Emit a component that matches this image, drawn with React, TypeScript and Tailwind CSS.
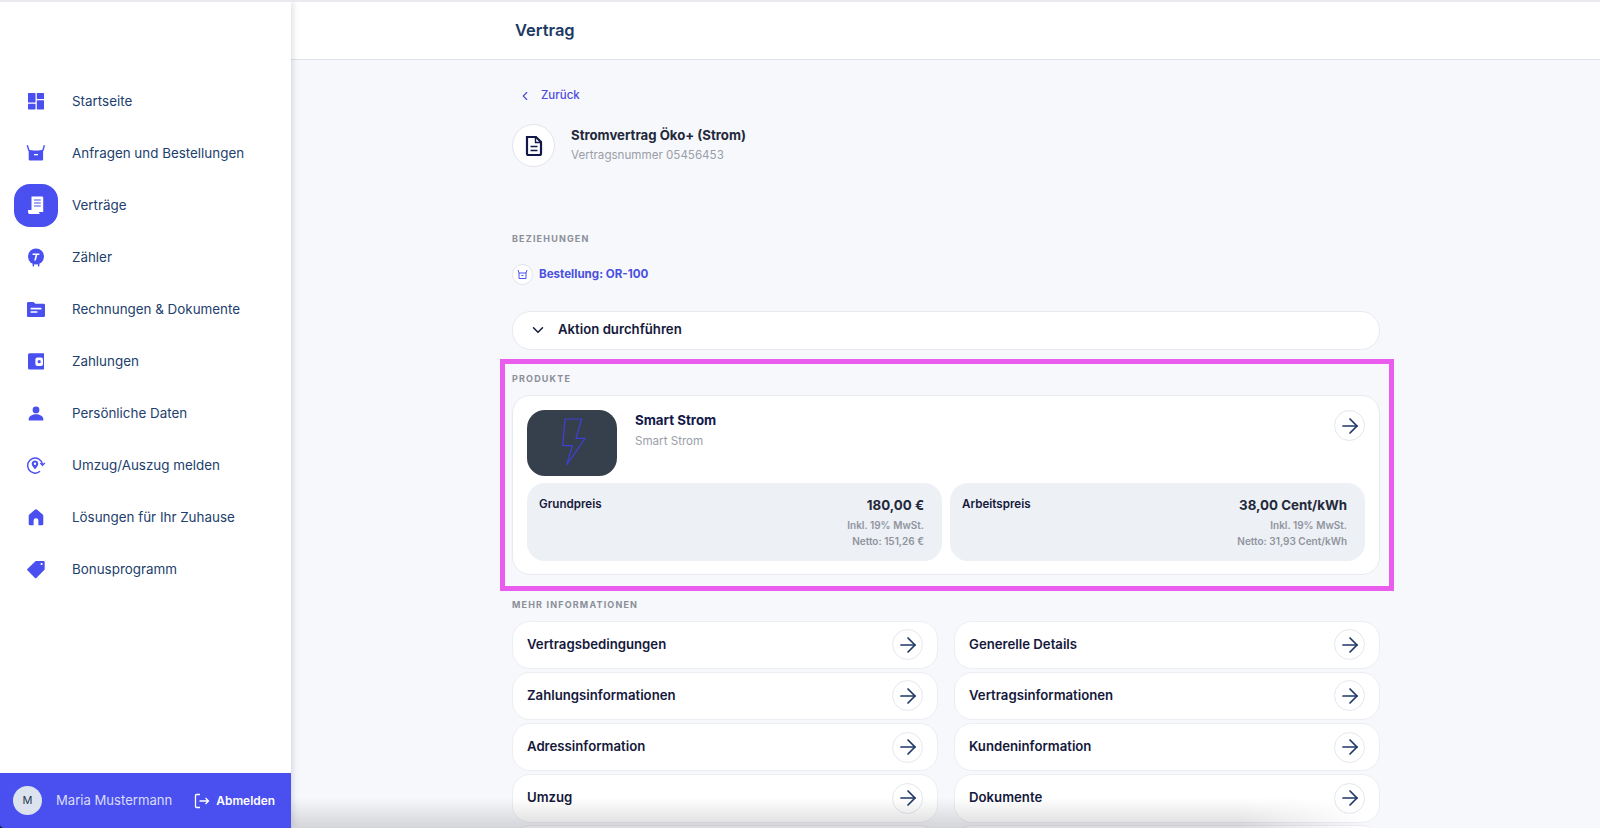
import React from 'react';
import { ArrowRight, ChevronDown, ChevronLeft } from 'lucide-react';

const BLUE = '#4a50ef';

const IconBox: React.FC<{ children: React.ReactNode; fill?: string }> = ({ children, fill = BLUE }) => (
  <svg width="24" height="24" viewBox="0 0 24 24" fill={fill}>
    {children}
  </svg>
);

const navItems: { label: string; icon: React.ReactNode; active?: boolean }[] = [
  {
    label: 'Startseite',
    icon: (
      <IconBox>
        <rect x="4" y="4" width="7.5" height="9.5" rx="0.6" />
        <rect x="4" y="14.8" width="7.5" height="5.6" rx="0.6" />
        <rect x="12.8" y="4" width="7.2" height="6" rx="0.6" />
        <rect x="12.8" y="11.2" width="7.2" height="9.2" rx="0.6" />
      </IconBox>
    ),
  },
  {
    label: 'Anfragen und Bestellungen',
    icon: (
      <IconBox>
        <path d="M3.3 4.3 L4.9 9.6 M20.4 4.3 L18.9 9.6" stroke={BLUE} strokeWidth="1.4" fill="none" />
        <path d="M4.7 8.4 C8 9.8 16 9.8 19.1 8.4 V18.3 a1.2 1.2 0 0 1 -1.2 1.2 H5.9 a1.2 1.2 0 0 1 -1.2 -1.2 Z" />
        <rect x="10" y="13" width="4" height="1.3" fill="#fff" />
      </IconBox>
    ),
  },
  {
    label: 'Verträge',
    active: true,
    icon: (
      <IconBox fill="#fff">
        <path d="M7.5 3.5 H18 a1.2 1.2 0 0 1 1.2 1.2 V19 H8 a0.5 0.5 0 0 1 -0.5 -0.5 Z" />
        <path d="M4 17 H15 V19 a2.2 2.2 0 0 0 1.2 2 H5.5 A1.9 1.9 0 0 1 4 19 Z" />
        <path d="M10 7 H16.8 M10 10 H16.8 M10 13 H16.8" stroke={BLUE} strokeWidth="1.1" fill="none" />
      </IconBox>
    ),
  },
  {
    label: 'Zähler',
    icon: (
      <IconBox>
        <circle cx="12" cy="11.5" r="8" />
        <path d="M8.5 19 L8.8 21.5 H10 L10.2 19 Z M13.8 19 L14 21.5 H15.2 L15.5 19 Z" />
        <path d="M8.6 8.6 H15.4 V9.9 H13.3 L11.8 15.6 H10.2 L11.6 9.9 H8.6 Z" fill="#fff" />
      </IconBox>
    ),
  },
  {
    label: 'Rechnungen & Dokumente',
    icon: (
      <IconBox>
        <path d="M3 6.2 A1.2 1.2 0 0 1 4.2 5 H9.5 L11.3 6.8 H19.8 A1.2 1.2 0 0 1 21 8 V18.8 A1.2 1.2 0 0 1 19.8 20 H4.2 A1.2 1.2 0 0 1 3 18.8 Z" />
        <rect x="6.5" y="10.8" width="11" height="1.6" rx="0.4" fill="#fff" />
        <rect x="6.5" y="14.2" width="7" height="1.6" rx="0.4" fill="#fff" />
      </IconBox>
    ),
  },
  {
    label: 'Zahlungen',
    icon: (
      <IconBox>
        <path d="M5.5 4.3 H20 V20.6 H5.5 A1.5 1.5 0 0 1 4 19.1 V5.8 A1.5 1.5 0 0 1 5.5 4.3 Z" />
        <rect x="11.4" y="8.4" width="7.6" height="8.6" rx="2" fill="#fff" />
        <circle cx="15.2" cy="12.7" r="1.6" />
      </IconBox>
    ),
  },
  {
    label: 'Persönliche Daten',
    icon: (
      <IconBox>
        <circle cx="12" cy="8.9" r="3.4" />
        <path d="M4.7 19.5 V18 C4.7 15 8.7 13.2 12 13.2 S19.3 15 19.3 18 V19.5 Z" />
      </IconBox>
    ),
  },
  {
    label: 'Umzug/Auszug melden',
    icon: (
      <IconBox>
        <path d="M16 18.3 A7.5 7.5 0 1 1 18.5 11.5" stroke={BLUE} strokeWidth="1.5" fill="none" />
        <path d="M16.4 10 L18.5 12.2 L20.8 10" stroke={BLUE} strokeWidth="1.5" fill="none" />
        <path d="M11 7.6 C13 7.6 14.3 9 14.3 10.7 C14.3 12.6 12.4 14.6 11 16.2 C9.6 14.6 7.7 12.6 7.7 10.7 C7.7 9 9 7.6 11 7.6 Z" />
        <circle cx="11" cy="10.7" r="1.2" fill="#fff" />
      </IconBox>
    ),
  },
  {
    label: 'Lösungen für Ihr Zuhause',
    icon: (
      <IconBox>
        <path d="M10.8 4.8 a1.9 1.9 0 0 1 2.4 0 L18.7 9.4 a1.8 1.8 0 0 1 .6 1.4 V19 a1.3 1.3 0 0 1 -1.3 1.3 H14.4 V15.6 a2.4 2.4 0 0 0 -4.8 0 V20.3 H6 a1.3 1.3 0 0 1 -1.3 -1.3 V10.8 a1.8 1.8 0 0 1 .6 -1.4 Z" />
      </IconBox>
    ),
  },
  {
    label: 'Bonusprogramm',
    icon: (
      <IconBox>
        <path d="M11.7 4 H19.7 a1 1 0 0 1 1 1 V12.6 L12.4 21 a1 1 0 0 1 -1.4 0 L3.4 13.3 a1 1 0 0 1 0 -1.4 Z" />
        <circle cx="17.6" cy="7" r="1.1" fill="#fff" />
      </IconBox>
    ),
  },
];

const infoLinks = [
  'Vertragsbedingungen',
  'Generelle Details',
  'Zahlungsinformationen',
  'Vertragsinformationen',
  'Adressinformation',
  'Kundeninformation',
  'Umzug',
  'Dokumente',
];

const ArrowButton: React.FC = () => (
  <div className="flex h-[31px] w-[31px] shrink-0 items-center justify-center rounded-full border border-[#e4e7ee] bg-white text-[#1d3766]">
    <ArrowRight size={24} strokeWidth={1.7} />
  </div>
);

const SectionLabel: React.FC<{ children: React.ReactNode }> = ({ children }) => (
  <div className="h-3 text-[9px] leading-3 font-bold tracking-[0.13em] text-[#8b8f98]">{children}</div>
);

const PriceBox: React.FC<{ label: string; price: string; net: string }> = ({ label, price, net }) => (
  <div className="flex h-[77.5px] justify-between rounded-[18px] bg-[#edf0f5] pt-[12px] pr-[18px] pl-[12px]">
    <div className="text-[11.6px] leading-[18px] font-semibold text-[#15193c]">{label}</div>
    <div className="text-right">
      <div className="text-[13.3px] leading-[20px] font-bold text-[#23293a]">{price}</div>
      <div className="mt-[2px] text-[10px] leading-[16px] font-semibold text-[#90949e]">Inkl. 19% MwSt.</div>
      <div className="text-[10px] leading-[16px] font-semibold text-[#90949e]">{net}</div>
    </div>
  </div>
);

const App: React.FC = () => {
  return (
    <div className="flex h-[828px] overflow-hidden border-t-2 border-[#e9eaee] bg-[#f6f8fc] font-['Inter',sans-serif]">
      {/* Sidebar */}
      <aside className="z-10 flex h-full w-[291px] shrink-0 flex-col bg-white shadow-[2px_0_6px_rgba(30,35,60,0.14)]">
        <nav className="flex-1 pt-[73px]">
          {navItems.map((item) => (
            <div key={item.label} className="flex h-[52px] items-center">
              <div
                className={`ml-[14px] flex h-[43px] w-[44px] items-center justify-center rounded-[16px] ${
                  item.active ? 'bg-[#4a50ef]' : ''
                }`}
              >
                {item.icon}
              </div>
              <span className="ml-[14px] text-[13.4px] text-[#22406d]">{item.label}</span>
            </div>
          ))}
        </nav>
        <div className="bg-[#15171f]">
          <div className="flex h-[55px] items-center rounded-bl-[4px] bg-[#4a50ef] pr-[16px] pl-[13px]">
            <div className="flex h-[29px] w-[29px] items-center justify-center rounded-full bg-[#dbe4ee] text-[11px] text-[#2b3a4f]">
              M
            </div>
            <span className="ml-[14px] text-[13.1px] text-[#d9dcfb]">Maria Mustermann</span>
            <svg className="ml-auto" width="16" height="16" viewBox="0 0 16 16" fill="none" stroke="#fff" strokeWidth="1.3">
              <path d="M6 1.5 H2.5 a1 1 0 0 0 -1 1 V13.5 a1 1 0 0 0 1 1 H6" />
              <path d="M5.5 8 H14.5 M11.5 5 L14.5 8 L11.5 11" />
            </svg>
            <span className="ml-[6px] text-[11.9px] font-semibold text-white">Abmelden</span>
          </div>
        </div>
      </aside>

      {/* Main */}
      <main className="relative flex-1">
        <header className="flex h-[58px] items-center border-b border-[#dfe2e8] bg-white pl-[224px]">
          <h1 className="text-[16.5px] font-semibold text-[#1c3a64]">Vertrag</h1>
        </header>

        <div className="ml-[221px] w-[868px]">
          <div className="mt-[26px] flex h-5 items-center text-[11.5px] font-medium text-[#4f4bdc]">
            <ChevronLeft size={14} strokeWidth={2} className="ml-[6px]" />
            <span className="ml-[9px]">Zurück</span>
          </div>

          <div className="mt-[18px] flex items-center">
            <div className="flex h-[43px] w-[43px] items-center justify-center rounded-full border border-[#e2e4ea] bg-white">
              <svg width="20" height="22" viewBox="0 0 20 22" fill="none" stroke="#12184a" strokeWidth="2.2">
                <path d="M3 2 H12 L17 7 V18.5 a1.5 1.5 0 0 1 -1.5 1.5 H4.5 A1.5 1.5 0 0 1 3 18.5 Z" />
                <path d="M6.5 11.5 H13.5 M6.5 15.5 H13.5" strokeWidth="1.6" />
                <path d="M11.5 2 V7.5 H17" strokeWidth="1.4" />
              </svg>
            </div>
            <div className="ml-[16px]">
              <div className="text-[13.2px] leading-[19px] font-bold text-[#23293a]">Stromvertrag Öko+ (Strom)</div>
              <div className="text-[11.6px] leading-[21px] text-[#9a9ea8]">Vertragsnummer 05456453</div>
            </div>
          </div>

          <div className="mt-[66px]">
            <SectionLabel>BEZIEHUNGEN</SectionLabel>
          </div>

          <div className="mt-[19px] flex h-[21px] items-center">
            <div className="flex h-[21px] w-[21px] items-center justify-center rounded-full border border-[#e2e4ea] bg-white">
              <svg width="11" height="11" viewBox="0 0 11 11" fill="none" stroke="#4a50ef" strokeWidth="1">
                <path d="M1 1 L2 4 H9 L10 1 M2 4 V9.5 H9 V4 M4.5 6.5 H6.5" />
              </svg>
            </div>
            <span className="ml-[6px] text-[11.6px] font-bold text-[#4a50e0]">Bestellung: OR-100</span>
          </div>

          <div className="mt-[26px] flex h-[38.5px] items-center rounded-[19px] border border-[#e8eaf0] bg-white pl-[16px]">
            <ChevronDown size={18} strokeWidth={2} className="text-[#15193c]" />
            <span className="ml-[11px] text-[13.2px] font-semibold text-[#15193c]">Aktion durchführen</span>
          </div>

          {/* Produkte */}
          <section className="relative mt-[23px]">
            <div className="pointer-events-none absolute -top-[14px] -right-[14px] -bottom-[16px] -left-[12px] border-[5px] border-[#ea5ced]" />
            <SectionLabel>PRODUKTE</SectionLabel>
            <div className="mt-[10.5px] h-[180px] rounded-[18px] border border-[#e8eaf0] bg-white p-[14px]">
              <div className="flex h-[66px]">
                <div className="h-[66px] w-[90px] shrink-0 rounded-[18px] bg-[#36404c]">
                  <svg width="90" height="66" viewBox="0 0 90 66" fill="none" stroke="#3f3fd8" strokeWidth="1.2">
                    <path d="M38 9 H54.7 L49 28.3 H58 L39.7 55 L45.3 35.7 H35.7 Z" />
                  </svg>
                </div>
                <div className="ml-[18px] flex-1">
                  <div className="text-[13.3px] leading-[20px] font-bold text-[#12184a]">Smart Strom</div>
                  <div className="text-[11.6px] leading-[22px] text-[#9a9ea8]">Smart Strom</div>
                </div>
                <ArrowButton />
              </div>
              <div className="mt-[7px] grid grid-cols-2 gap-[8px]">
                <PriceBox label="Grundpreis" price="180,00 €" net="Netto: 151,26 €" />
                <PriceBox label="Arbeitspreis" price="38,00 Cent/kWh" net="Netto: 31,93 Cent/kWh" />
              </div>
            </div>
          </section>

          {/* Mehr Informationen */}
          <div className="mt-[23.5px]">
            <SectionLabel>MEHR INFORMATIONEN</SectionLabel>
          </div>
          <div className="mt-[10px] grid grid-cols-2 gap-x-[16px] gap-y-[2.7px]">
            {infoLinks.map((label) => (
              <div
                key={label}
                className="flex h-[48.5px] items-center justify-between rounded-[18px] border border-[#eceef3] bg-white pr-[14px] pl-[14px]"
              >
                <span className="text-[13.2px] font-semibold text-[#15193c]">{label}</span>
                <ArrowButton />
              </div>
            ))}
            {/* next row is only just visible at the fold */}
            <div className="h-[48.5px] rounded-[18px] border border-[#eceef3] bg-white" />
            <div className="h-[48.5px] rounded-[18px] border border-[#eceef3] bg-white" />
          </div>
        </div>

        {/* bottom fade, dies out towards the right */}
        <div className="pointer-events-none absolute bottom-0 left-0 h-[30px] w-[1075px] bg-gradient-to-b from-transparent to-[#00000024] [mask-image:linear-gradient(to_right,black_88%,transparent)]" />
      </main>
    </div>
  );
};

export default App;
